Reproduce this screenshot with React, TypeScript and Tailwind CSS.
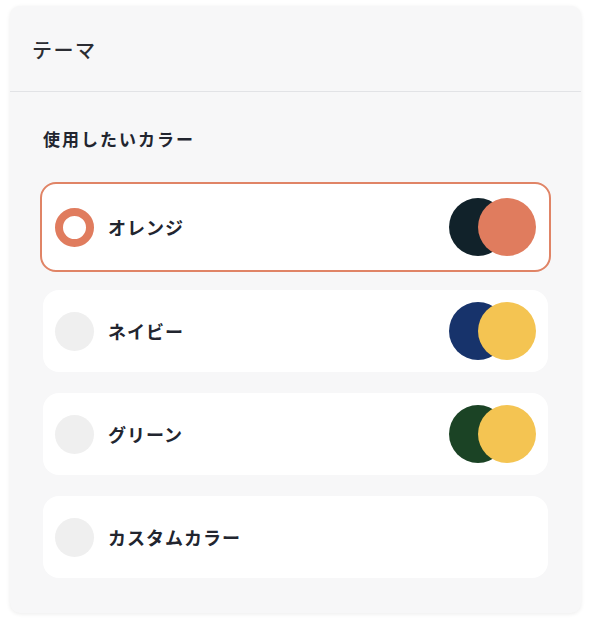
import { clsx } from 'clsx'

interface ThemeOption {
  label: string
  colors?: [string, string]
}

const themeOptions: ThemeOption[] = [
  { label: 'オレンジ', colors: ['#11222a', '#e07c5e'] },
  { label: 'ネイビー', colors: ['#17336b', '#f4c452'] },
  { label: 'グリーン', colors: ['#1b4325', '#f4c452'] },
  { label: 'カスタムカラー' },
]

const jpFont = "font-['Noto_Sans_CJK_JP','Noto_Sans',sans-serif]"

function ColorPair({ colors }: { colors: [string, string] }) {
  return (
    <div className="flex items-center">
      <span className="h-[58px] w-[58px] rounded-full" style={{ backgroundColor: colors[0] }} />
      <span className="-ml-[29px] h-[58px] w-[58px] rounded-full" style={{ backgroundColor: colors[1] }} />
    </div>
  )
}

function ThemeRow({ option, selected }: { option: ThemeOption; selected: boolean }) {
  return (
    <div
      className={clsx(
        'flex items-center justify-between bg-white',
        selected
          ? '-mx-[3px] -mb-[3px] h-[90px] rounded-[16px] border-2 border-[#e08466] px-[13px]'
          : 'h-[82px] rounded-[16px] px-[12px]',
      )}
    >
      <div className="flex items-center gap-[14px]">
        {selected ? (
          <span className="h-[39px] w-[39px] rounded-full border-[8px] border-[#e07c5e] bg-white" />
        ) : (
          <span className="h-[39px] w-[39px] rounded-full bg-[#efefef]" />
        )}
        <span className="text-[18px] font-bold tracking-[1px] text-[#22252f]">{option.label}</span>
      </div>
      {option.colors && <ColorPair colors={option.colors} />}
    </div>
  )
}

export default function App() {
  return (
    <div className={clsx('h-[627px] w-[591px] bg-white px-[10px] pt-[6px]', jpFont)}>
      <div className="h-[607px] rounded-[10px] bg-[#f7f7f8] shadow-[0_1px_4px_rgba(0,0,0,0.08)]">
        <div className="flex h-[86px] items-center border-b border-[#e2e3e6] px-[22px] pt-[2px]">
          <h2 className="text-[20px] font-medium tracking-[1.5px] text-[#2b2d33]">テーマ</h2>
        </div>
        <div className="px-[33px] pt-[35px]">
          <p className="mb-[31px] text-[17px] leading-6 font-bold tracking-[2px] text-[#22252f]">
            使用したいカラー
          </p>
          <div className="flex flex-col gap-[21px]">
            {themeOptions.map((option, i) => (
              <ThemeRow key={option.label} option={option} selected={i === 0} />
            ))}
          </div>
        </div>
      </div>
    </div>
  )
}
